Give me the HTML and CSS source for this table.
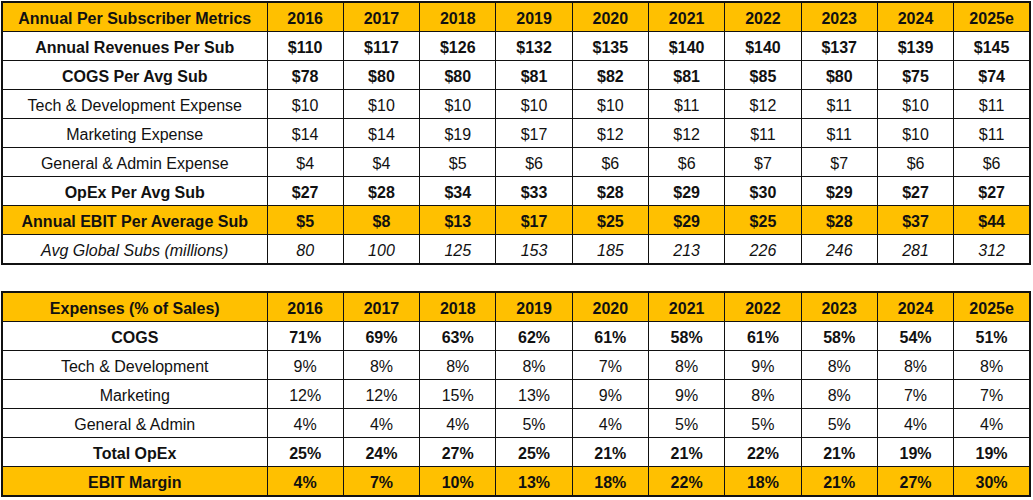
FILE: index.html
```html
<!DOCTYPE html>
<html>
<head>
<meta charset="utf-8">
<link rel="stylesheet" href="styles.css">
</head>
<body>
<div class="page">
<table class="metrics">
  <colgroup><col class="label-col"><col span="10"></colgroup>
  <tr class="hl bold"><td>Annual Per Subscriber Metrics</td><td>2016</td><td>2017</td><td>2018</td><td>2019</td><td>2020</td><td>2021</td><td>2022</td><td>2023</td><td>2024</td><td>2025e</td></tr>
  <tr class="bold"><td>Annual Revenues Per Sub</td><td>$110</td><td>$117</td><td>$126</td><td>$132</td><td>$135</td><td>$140</td><td>$140</td><td>$137</td><td>$139</td><td>$145</td></tr>
  <tr class="bold"><td>COGS Per Avg Sub</td><td>$78</td><td>$80</td><td>$80</td><td>$81</td><td>$82</td><td>$81</td><td>$85</td><td>$80</td><td>$75</td><td>$74</td></tr>
  <tr><td>Tech &amp; Development Expense</td><td>$10</td><td>$10</td><td>$10</td><td>$10</td><td>$10</td><td>$11</td><td>$12</td><td>$11</td><td>$10</td><td>$11</td></tr>
  <tr><td>Marketing Expense</td><td>$14</td><td>$14</td><td>$19</td><td>$17</td><td>$12</td><td>$12</td><td>$11</td><td>$11</td><td>$10</td><td>$11</td></tr>
  <tr><td>General &amp; Admin Expense</td><td>$4</td><td>$4</td><td>$5</td><td>$6</td><td>$6</td><td>$6</td><td>$7</td><td>$7</td><td>$6</td><td>$6</td></tr>
  <tr class="bold"><td>OpEx Per Avg Sub</td><td>$27</td><td>$28</td><td>$34</td><td>$33</td><td>$28</td><td>$29</td><td>$30</td><td>$29</td><td>$27</td><td>$27</td></tr>
  <tr class="hl bold"><td>Annual EBIT Per Average Sub</td><td>$5</td><td>$8</td><td>$13</td><td>$17</td><td>$25</td><td>$29</td><td>$25</td><td>$28</td><td>$37</td><td>$44</td></tr>
  <tr class="ital"><td>Avg Global Subs (millions)</td><td>80</td><td>100</td><td>125</td><td>153</td><td>185</td><td>213</td><td>226</td><td>246</td><td>281</td><td>312</td></tr>
</table>

<table class="metrics second">
  <colgroup><col class="label-col"><col span="10"></colgroup>
  <tr class="hl bold"><td>Expenses (% of Sales)</td><td>2016</td><td>2017</td><td>2018</td><td>2019</td><td>2020</td><td>2021</td><td>2022</td><td>2023</td><td>2024</td><td>2025e</td></tr>
  <tr class="bold"><td>COGS</td><td>71%</td><td>69%</td><td>63%</td><td>62%</td><td>61%</td><td>58%</td><td>61%</td><td>58%</td><td>54%</td><td>51%</td></tr>
  <tr><td>Tech &amp; Development</td><td>9%</td><td>8%</td><td>8%</td><td>8%</td><td>7%</td><td>8%</td><td>9%</td><td>8%</td><td>8%</td><td>8%</td></tr>
  <tr><td>Marketing</td><td>12%</td><td>12%</td><td>15%</td><td>13%</td><td>9%</td><td>9%</td><td>8%</td><td>8%</td><td>7%</td><td>7%</td></tr>
  <tr><td>General &amp; Admin</td><td>4%</td><td>4%</td><td>4%</td><td>5%</td><td>4%</td><td>5%</td><td>5%</td><td>5%</td><td>4%</td><td>4%</td></tr>
  <tr class="bold"><td>Total OpEx</td><td>25%</td><td>24%</td><td>27%</td><td>25%</td><td>21%</td><td>21%</td><td>22%</td><td>21%</td><td>19%</td><td>19%</td></tr>
  <tr class="hl bold"><td>EBIT Margin</td><td>4%</td><td>7%</td><td>10%</td><td>13%</td><td>18%</td><td>22%</td><td>18%</td><td>21%</td><td>27%</td><td>30%</td></tr>
</table>
</div>
</body>
</html>
```

FILE: styles.css
```css
html, body {
  margin: 0;
  padding: 0;
  background: #ffffff;
}

.page {
  padding: 1px 0 0 1px;
  font-family: "Liberation Sans", Arial, sans-serif;
  color: #111111;
}

.metrics {
  border-collapse: collapse;
  table-layout: fixed;
  width: 1030px;
  border: 2px solid #111111;
  font-size: 16px;
}

.metrics .label-col {
  width: 265px;
}

.metrics td {
  border: 1px solid #111111;
  height: 25px;
  padding: 3px 0 0 0;
  text-align: center;
  vertical-align: middle;
  white-space: nowrap;
  line-height: 18px;
}

.second {
  margin-top: 26px;
}

.hl td {
  background: #ffc000;
}

.bold td {
  font-weight: bold;
}

.ital td {
  font-style: italic;
}
```
